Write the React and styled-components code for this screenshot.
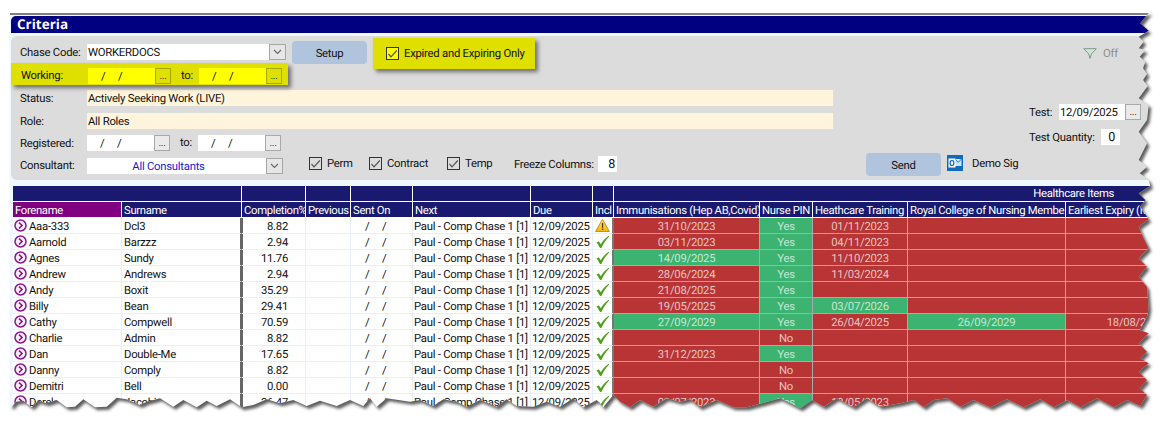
import React from 'react';
import styled, { createGlobalStyle } from 'styled-components';

const Global = createGlobalStyle`
  html, body { margin: 0; padding: 0; background: #fff; }
  body { font-family: Roboto, "Liberation Sans", sans-serif; font-size: 11.3px; letter-spacing: -0.25px; color: #111; text-rendering: geometricPrecision; }
`;

const Page = styled.div`position: relative; width: 1167px; height: 426px; overflow: hidden; padding: 13px 0 0 10px; box-sizing: border-box; background: #fff;`;
const Frame = styled.div`width: 1157px; height: 413px; overflow: hidden; background: #f0f8ff; border-top: 2px solid #7f7f7f; padding: 1px 0 0 1px; box-sizing: border-box;`;
const TitleBar = styled.div`height: 17px; background: #000080; border-top-left-radius: 5px; color: #fff; font: bold 13.5px/17px "Open Sans", sans-serif; letter-spacing: 0; padding-left: 6px;`;
const Panel = styled.div`display: flex; margin-top: 3px; height: 144px; background: #dcdcdc; border-radius: 6px;`;
const LeftForm = styled.div`width: 1018px; flex: none; display: flex; flex-direction: column;`;
const RightForm = styled.div`display: flex; flex-direction: column; padding-top: 10px;`;
const TopBlock = styled.div`display: flex; align-items: flex-start; height: 49px;`;
const ChaseCol = styled.div`width: 277px; flex: none; position: relative;`;
const FieldRow = styled.div`display: flex; align-items: center; height: 16px; margin-top: ${p => p.$top || 0}px; padding-left: 9px;`;
const Label = styled.div`width: ${p => p.$w || 67}px; flex: none; white-space: nowrap;`;
const ConsultantLabel = styled(Label)`margin-top: 6px;`;
const WorkingBox = styled.div`display: flex; align-items: flex-start; width: 277px; height: 22px; margin-top: 3px; padding: 5px 0 0 10px; box-sizing: border-box; background: #dfdf00; box-shadow: 3px 3px 4px rgba(40,40,40,.6); position: relative; z-index: 2;`;
const WorkingLabel = styled.div`width: 67px; line-height: 16px; flex: none;`;
const TextBox = styled.div`display: flex; align-items: center; height: 16px; width: ${p => p.$w}px; flex: none; padding-left: 1px; box-sizing: border-box; background: ${p => p.$bg || '#fff'}; color: ${p => p.$color || '#111'}; white-space: nowrap; overflow: hidden;`;
const CentredBox = styled(TextBox)`justify-content: center; padding: 0 16px 0 0;`;
const NumberBox = styled(TextBox)`justify-content: flex-end; padding: 0 ${p => p.$pad}px 0 0; font-size: 12.5px;`;
const DateBox = styled.div`display: flex; align-items: center; justify-content: space-between; height: 16px; width: ${p => p.$w || 83}px; flex: none; background: ${p => p.$bg || '#fff'};`;
const Slashes = styled.span`display: flex; gap: 12.5px; padding-left: ${p => p.$left || 14}px;`;
const DottedButton = styled.div`width: 16px; height: 16px; flex: none; box-sizing: border-box; text-align: center; line-height: 15px; border: 1px solid ${p => p.$hot ? '#a8a800' : '#a9a9a9'}; background: ${p => p.$hot ? '#dfdf00' : '#eaeaea'}; font-size: 10px; color: #222;`;
const ToLabel = styled.div`width: ${p => p.$w || 28}px; flex: none; padding-left: 10px; box-sizing: border-box; line-height: 16px;`;
const DropButton = styled.div`width: 17px; height: 16px; flex: none; box-sizing: border-box; display: flex; align-items: center; justify-content: center; border: 1px solid #a6a6a6; background: #e6e6e6;`;
const ActionButton = styled.div`width: 75px; height: 23px; flex: none; box-sizing: border-box; padding-top: 1px; display: flex; align-items: center; justify-content: center; border-radius: 4px; background: #b0c4de; margin: ${p => p.$margin};`;
const ExpiredBox = styled.div`display: flex; align-items: center; width: 162px; height: 31px; margin: 2px 0 0 6px; padding: 0 0 0 13px; box-sizing: border-box; background: #dfdf00; box-shadow: 3px 3px 4px rgba(40,40,40,.6); gap: 5px; white-space: nowrap;`;
const CheckBoxMark = styled.div`width: 13px; height: 13px; box-sizing: border-box; flex: none; display: flex; align-items: center; justify-content: center; border: 1px solid #333; background: ${p => p.$bg || 'transparent'};`;
const BottomRow = styled.div`display: flex; align-items: flex-start; height: 23px; margin-top: 2px; padding-left: 9px;`;
const ConsultantWrap = styled.div`display: flex; margin-top: 5px;`;
const CheckItem = styled.div`display: flex; align-items: center; gap: 5px; width: ${p => p.$w}px; flex: none; height: 13px; margin: 4px 0 0 ${p => p.$ml || 0}px;`;
const FreezeGroup = styled.div`display: flex; align-items: center; height: 16px; margin-top: 3px;`;
const DemoSig = styled.div`margin: 3px 0 0 9px; line-height: 15px;`;
const OutlookWrap = styled.svg`margin: 2px 0 0 6px; flex: none;`;
const OffRow = styled.div`display: flex; align-items: center; height: 14px; margin-left: 54px; gap: 6px; color: #8c8c8c;`;
const TestRow = styled.div`display: flex; align-items: center; height: 16px; margin-top: ${p => p.$top}px;`;

const Table = styled.div`display: grid; margin: 6px 0 0 2px; width: 1193px; grid-template-columns: 109px 120px 64px 45px 62px 118px 62px 21px 146px 53px 95px 158px 140px; grid-auto-rows: 16px;`;
const HeadCell = styled.div`box-sizing: border-box; padding: 1px 0 0 2px; background: ${p => p.$bg || '#191970'}; color: #fff; border-right: 1px solid #fff; border-bottom: 1px solid #fff; line-height: 15px; letter-spacing: -0.33px; white-space: nowrap; overflow: hidden; grid-column: ${p => p.$span ? `span ${p.$span}` : 'auto'};`;
const GroupCell = styled(HeadCell)`border-right: 0; padding-top: 0; text-align: right; padding-right: 92px;`;
const Cell = styled.div`box-sizing: border-box; display: flex; align-items: center; padding: 1px 0 0 1px; background: #fff; border-right: 1px solid #e6f0fa; border-bottom: 1px solid #e6f0fa; white-space: nowrap; overflow: hidden;`;
const NameCell = styled(Cell)`padding-top: 0; gap: 2px;`;
const NameText = styled.span`padding-top: 1px;`;
const RowIconSvg = styled.svg`flex: none;`;
const SurnameCell = styled(Cell)`padding-left: 2px; border-right: 2px solid #666;`;
const PercentCell = styled(Cell)`justify-content: flex-end; padding-right: 17px; box-shadow: inset 1px 0 #666;`;
const SentCell = styled(Cell)`padding-left: 0;`;
const InclCell = styled(Cell)`padding: 0 0 0 2px; border-right: 2px solid #777;`;
const StatusCell = styled.div`box-sizing: border-box; display: flex; align-items: center; justify-content: center; padding-top: 1px; background: ${p => p.$ok ? '#3cb371' : '#b93535'}; color: ${p => p.$ok ? '#c9e6d2' : '#e6c4c4'}; border-right: 1px solid #aaa; border-bottom: 1px solid #aaa; white-space: nowrap; overflow: hidden;`;
const Overlay = styled.svg`position: absolute; left: 0; top: 0; pointer-events: none;`;

const rows = [
  ['Aaa-333', 'Dcl3', '8.82', 'w', ['31/10/2023', 0], ['Yes', 1], ['01/11/2023', 0]],
  ['Aarnold', 'Barzzz', '2.94', 'c', ['03/11/2023', 0], ['Yes', 1], ['04/11/2023', 0]],
  ['Agnes', 'Sundy', '11.76', 'c', ['14/09/2025', 1], ['Yes', 1], ['11/10/2023', 0]],
  ['Andrew', 'Andrews', '2.94', 'c', ['28/06/2024', 0], ['Yes', 1], ['11/03/2024', 0]],
  ['Andy', 'Boxit', '35.29', 'c', ['21/08/2025', 0], ['Yes', 1], ['', 0]],
  ['Billy', 'Bean', '29.41', 'c', ['19/05/2025', 0], ['Yes', 1], ['03/07/2026', 1]],
  ['Cathy', 'Compwell', '70.59', 'c', ['27/09/2029', 1], ['Yes', 1], ['26/04/2025', 0], ['26/09/2029', 1], ['18/08/2023', 0]],
  ['Charlie', 'Admin', '8.82', 'c', ['', 0], ['No', 0], ['', 0]],
  ['Dan', 'Double-Me', '17.65', 'c', ['31/12/2023', 0], ['Yes', 1], ['', 0]],
  ['Danny', 'Comply', '8.82', 'c', ['', 0], ['No', 0], ['', 0]],
  ['Demitri', 'Bell', '0.00', 'c', ['', 0], ['No', 0], ['', 0]],
  ['Derek', 'Jacobi', '26.47', 'c', ['03/07/2023', 0], ['Yes', 1], ['18/05/2023', 0]],
];

const Tick = ({ color = '#555' }) => (
  <svg width="11" height="10" viewBox="0 0 11 10"><path d="M1.5 5 L4 7.8 L9.8 1.5" fill="none" stroke={color} strokeWidth="1.2" /></svg>
);
const Chevron = () => (
  <svg width="9" height="6" viewBox="0 0 9 6"><path d="M1 1 L4.5 4.5 L8 1" fill="none" stroke="#666" strokeWidth="1.1" /></svg>
);
const RowIcon = () => (
  <RowIconSvg width="13" height="13" viewBox="0 0 13 13">
    <circle cx="6.5" cy="6.5" r="5.5" fill="#f6eef6" stroke="#8b1a8b" strokeWidth="1.5" />
    <path d="M5 3.5 L8 6.5 L5 9.5" fill="none" stroke="#7a1a7a" strokeWidth="1.6" />
  </RowIconSvg>
);
const GreenCheck = () => (
  <svg width="15" height="14" viewBox="0 0 15 14">
    <path d="M1.5 7.5 L3.8 6.6 L5.8 9.2 C7.6 6.2 10 3.4 13.6 0.8 L14.2 1.4 C10.9 4.9 8.6 8.2 6.3 13 L5 13 C4 10.8 2.9 9 1.5 7.5 Z" fill="#4f9f1d" />
  </svg>
);
const Warn = () => (
  <svg width="15" height="15" viewBox="0 0 15 14">
    <defs><linearGradient id="wg" x1="0" y1="0" x2="0" y2="1"><stop offset="0" stopColor="#ffe98a" /><stop offset="1" stopColor="#f4b400" /></linearGradient></defs>
    <path d="M7.5 0.8 L14.4 13 L0.6 13 Z" fill="url(#wg)" stroke="#b98a10" strokeWidth="0.9" strokeLinejoin="round" />
    <rect x="6.9" y="4.4" width="1.3" height="4.8" fill="#4a3a10" />
    <rect x="6.9" y="10" width="1.3" height="1.4" fill="#4a3a10" />
  </svg>
);
const Funnel = () => (
  <svg width="14" height="11" viewBox="0 0 14 11"><path d="M0.7 0.7 H13.3 L8.4 6 L7 10.4 L5.8 6 Z" fill="#cfe8d6" stroke="#7f9a88" strokeWidth="1" /></svg>
);
const Outlook = () => (
  <OutlookWrap width="16" height="16" viewBox="0 0 16 16">
    <rect width="16" height="16" fill="#0f6cbd" />
    <path d="M8 4 H14.5 V11 H8 Z" fill="#cfe6f7" />
    <path d="M8 4 L11.2 7.4 L14.5 4" fill="none" stroke="#0f6cbd" strokeWidth="0.9" />
    <rect x="1.5" y="3.5" width="7" height="9" fill="#fff" />
    <rect x="3.2" y="5.6" width="3.6" height="4.8" rx="1.6" fill="none" stroke="#0f6cbd" strokeWidth="1.3" />
  </OutlookWrap>
);
const Check = ({ bg }) => <CheckBoxMark $bg={bg}><Tick /></CheckBoxMark>;

const DateField = ({ bg, hot, w }) => (
  <DateBox $bg={bg} $w={w}><Slashes $left={13}><span>/</span><span>/</span></Slashes><DottedButton $hot={hot}>...</DottedButton></DateBox>
);

const pts = (list, fn) => list.map(([a, b]) => fn(a, b));
const right = [
  ...pts([[1148, 35], [1120, 70], [1145, 92], [1115, 110], [1130, 125], [1115, 145], [1135, 150], [1118, 170], [1135, 185], [1128, 205], [1140, 222], [1128, 240], [1142, 258], [1115, 295], [1145, 315], [1140, 360], [1115, 395], [1140, 430], [1115, 480], [1140, 500], [1118, 520], [1145, 540]], (a, b) => [767 + a / 3, b / 3]),
  ...pts([[1150, 18], [1115, 40], [1135, 60], [1120, 80], [1145, 118], [1115, 140], [1128, 170], [1145, 205], [1115, 235], [1140, 260], [1115, 290], [1140, 320]], (a, b) => [767 + a / 3, 180 + b / 3]),
  ...pts([[1145, 25], [1140, 50], [1118, 90], [1145, 100], [1115, 130], [1140, 155], [1120, 175], [1145, 190], [1115, 215], [1140, 240], [1118, 265], [1140, 285]], (a, b) => [767 + a / 3, 300 + b / 3]),
];
const bottomR = [[1120, 318], [1080, 300], [1040, 322], [990, 295], [940, 322], [900, 300], [860, 322], [820, 298], [770, 322], [720, 298], [670, 322], [620, 300], [580, 320], [540, 295], [500, 300], [470, 322], [440, 300], [400, 310], [340, 320], [300, 295], [260, 322], [210, 295], [170, 320], [135, 300], [100, 325], [40, 295]];
const bottomM = [[1040, 322], [1000, 322], [950, 300], [900, 322], [870, 298], [840, 305], [800, 295], [760, 320], [720, 300], [690, 322], [660, 305], [640, 285], [610, 322], [590, 300], [550, 322], [520, 295], [480, 320], [440, 305], [400, 320], [350, 318], [320, 298], [290, 320], [240, 300], [200, 320], [170, 305], [130, 298], [100, 318], [60, 300], [30, 305]];
const bottomL = [[1160, 295], [1130, 320], [1110, 295], [1090, 318], [1050, 300], [1010, 318], [960, 302], [920, 318], [880, 300], [840, 310], [800, 298], [760, 315], [725, 322], [690, 298], [650, 318], [620, 302], [590, 322], [550, 300], [520, 320], [480, 295], [440, 305], [420, 315], [380, 298], [350, 293], [320, 320], [285, 322], [250, 298], [225, 320], [200, 322], [170, 300], [140, 310], [115, 302], [95, 322], [70, 302], [48, 305], [35, 320]];
const edge = [
  [10, 12.5], [1147, 12.5], ...right,
  ...pts(bottomR, (a, b) => [767 + a / 3, 300 + b / 3]),
  ...pts(bottomM, (a, b) => [400 + a / 3, 300 + b / 3]),
  ...pts(bottomL, (a, b) => [a / 3, 300 + b / 3]),
  [10, 406],
];
const shape = 'M' + edge.map(([x, y]) => `${x.toFixed(1)} ${y.toFixed(1)}`).join('L') + 'Z';
const outer = 'M0 0H1167V426H0Z';

export default function App() {
  return (
    <>
      <Global />
      <Page>
        <Frame>
          <TitleBar>Criteria</TitleBar>
          <Panel>
            <LeftForm>
              <TopBlock>
                <ChaseCol>
                  <FieldRow $top={8}>
                    <Label>Chase Code:</Label>
                    <TextBox $w={182}>WORKERDOCS</TextBox>
                    <DropButton><Chevron /></DropButton>
                  </FieldRow>
                  <WorkingBox>
                    <WorkingLabel>Working:</WorkingLabel>
                    <DateField bg="#ffff00" hot />
                    <ToLabel>to:</ToLabel>
                    <DateField bg="#ffff00" hot />
                  </WorkingBox>
                </ChaseCol>
                <ActionButton $margin="5px 0 0 4px">Setup</ActionButton>
                <ExpiredBox><Check bg="#ffff00" />Expired and Expiring Only</ExpiredBox>
              </TopBlock>
              <FieldRow $top={5}><Label>Status:</Label><TextBox $w={746} $bg="#fff5dc">Actively Seeking Work (LIVE)</TextBox></FieldRow>
              <FieldRow $top={7}><Label>Role:</Label><TextBox $w={746} $bg="#fff5dc">All Roles</TextBox></FieldRow>
              <FieldRow $top={6}>
                <Label>Registered:</Label>
                <DateField />
                <ToLabel>to:</ToLabel>
                <DateField />
              </FieldRow>
              <BottomRow>
                <ConsultantLabel>Consultant:</ConsultantLabel>
                <ConsultantWrap>
                  <CentredBox $w={179} $color="#1a1ad0">All Consultants</CentredBox>
                  <DropButton><Chevron /></DropButton>
                </ConsultantWrap>
                <CheckItem $w={60} $ml={26}><Check />Perm</CheckItem>
                <CheckItem $w={78}><Check />Contract</CheckItem>
                <CheckItem $w={67}><Check />Temp</CheckItem>
                <FreezeGroup>
                  <Label $w={84}>Freeze Columns:</Label>
                  <NumberBox $w={19} $pad={2}>8</NumberBox>
                </FreezeGroup>
                <ActionButton $margin="0 0 0 249px">Send</ActionButton>
                <Outlook />
                <DemoSig>Demo Sig</DemoSig>
              </BottomRow>
            </LeftForm>
            <RightForm>
              <OffRow><Funnel />Off</OffRow>
              <TestRow $top={44}>
                <Label $w={30}>Test:</Label>
                <TextBox $w={66}>12/09/2025</TextBox>
                <DottedButton>...</DottedButton>
              </TestRow>
              <TestRow $top={9}>
                <Label $w={72}>Test Quantity:</Label>
                <NumberBox $w={19} $pad={5}>0</NumberBox>
              </TestRow>
            </RightForm>
          </Panel>
          <Table>
            <HeadCell $span={2} />
            <HeadCell /><HeadCell /><HeadCell /><HeadCell /><HeadCell /><HeadCell />
            <GroupCell $span={5}>Healthcare Items</GroupCell>
            <HeadCell $bg="#800080">Forename</HeadCell>
            <HeadCell>Surname</HeadCell>
            <HeadCell>Completion%</HeadCell>
            <HeadCell>Previous</HeadCell>
            <HeadCell>Sent On</HeadCell>
            <HeadCell>Next</HeadCell>
            <HeadCell>Due</HeadCell>
            <HeadCell>Incl</HeadCell>
            <HeadCell>Immunisations (Hep AB,Covid)</HeadCell>
            <HeadCell>Nurse PIN</HeadCell>
            <HeadCell>Heathcare Training</HeadCell>
            <HeadCell>Royal College of Nursing Membe</HeadCell>
            <HeadCell>Earliest Expiry (MMM)</HeadCell>
            {rows.map(([fore, sur, pct, incl, imm, pin, train, rcn = ['', 0], early = ['', 0]]) => (
              <React.Fragment key={fore}>
                <NameCell><RowIcon /><NameText>{fore}</NameText></NameCell>
                <SurnameCell>{sur}</SurnameCell>
                <PercentCell>{pct}</PercentCell>
                <Cell />
                <SentCell><Slashes><span>/</span><span>/</span></Slashes></SentCell>
                <Cell>Paul - Comp Chase 1 [1]</Cell>
                <Cell>12/09/2025</Cell>
                <InclCell>{incl === 'w' ? <Warn /> : <GreenCheck />}</InclCell>
                <StatusCell $ok={imm[1]}>{imm[0]}</StatusCell>
                <StatusCell $ok={pin[1]}>{pin[0]}</StatusCell>
                <StatusCell $ok={train[1]}>{train[0]}</StatusCell>
                <StatusCell $ok={rcn[1]}>{rcn[0]}</StatusCell>
                <StatusCell $ok={early[1]}>{early[0]}</StatusCell>
              </React.Fragment>
            ))}
          </Table>
        </Frame>
        <Overlay width="1167" height="426" viewBox="0 0 1167 426">
          <defs>
            <filter id="soft" x="-5%" y="-5%" width="110%" height="110%"><feGaussianBlur stdDeviation="1.6" /></filter>
            <clipPath id="outside"><path d={outer + shape} clipRule="evenodd" /></clipPath>
          </defs>
          <path d={outer + shape} fillRule="evenodd" fill="#fff" />
          <g clipPath="url(#outside)">
            <path d={shape} transform="translate(2.5 3)" fill="#333" fillOpacity="0.8" filter="url(#soft)" />
          </g>
        </Overlay>
      </Page>
    </>
  );
}
